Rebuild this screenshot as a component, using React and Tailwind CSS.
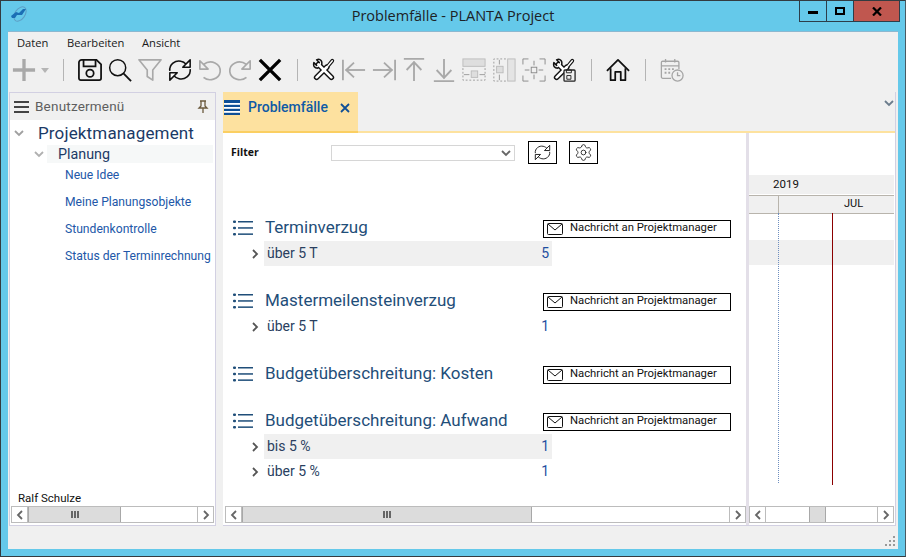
import React from 'react';
import { Settings } from 'lucide-react';

const GRAY = '#a9a9a9';
const NAVY = '#1f4e79';

const Tools = ({ save }) => (
  <svg width="24" height="24" viewBox="0 0 26 26" fill="none" strokeLinecap="round" strokeLinejoin="round">
    <g stroke="#111">
      <path d="M7 7 L21 21" strokeWidth="6" />
      <path d="M5 21 L16 10" strokeWidth="6" />
      <path d="M17 9 L22 3" strokeWidth="4" />
    </g>
    <path d="M2 5 L5 8 L8 5 L5 2 C9 0 12 4 10 8 L6 11 C3 11 1 9 2 5Z" fill="#fff" stroke="#111" strokeWidth="1.6" />
    <g stroke="#fff">
      <path d="M7 7 L21 21" strokeWidth="3" />
      <path d="M5 21 L16 10" strokeWidth="3" />
      <path d="M17 9 L22 3" strokeWidth="1.6" />
    </g>
    {save && (
      <g>
        <rect x="13" y="13" width="12" height="12" rx="1" fill="#f0f0f0" stroke="#222" strokeWidth="1.4" />
        <rect x="16" y="13" width="5" height="3" stroke="#222" />
        <rect x="16.5" y="19" width="4" height="4" stroke="#222" />
      </g>
    )}
  </svg>
);

const Refresh = ({ size = 24, weight = 1.7 }) => (
  <svg width={size} height={size} viewBox="0 0 26 26" fill="none" stroke="#111" strokeWidth={weight}>
    <path d="M2 14 C1 7 8 2 14 3.5 C17 4 19 6 20 7" />
    <path d="M24 12 C25 19 18 24 12 22.5 C9 22 7 20 6 19" />
    <path d="M24 2 V10 H16 Z" fill="#fff" strokeLinejoin="round" />
    <path d="M2 24 V16 H10 Z" fill="#fff" strokeLinejoin="round" />
  </svg>
);

const Undo = ({ flip }) => (
  <svg width="24" height="24" viewBox="0 0 26 26" fill="none" stroke={GRAY} strokeWidth="1.8" className={flip ? '-scale-x-100' : ''}>
    <path d="M6 7 C14 1 25 6 24 15 C23 23 12 26 6 21" />
    <path d="M2 3 V12 H11 Z" fill="#f0f0f0" strokeLinejoin="round" />
  </svg>
);

const ArrowIcon = ({ rotate }) => (
  <svg width="24" height="24" viewBox="0 0 26 26" fill="none" stroke={GRAY} strokeWidth="2" className={rotate}>
    <path d="M1 2 V24" />
    <path d="M4 13 H25" />
    <path d="M13 5 L4.5 13 L13 21" />
  </svg>
);

const boxes = {
  horizontal: (
    <>
      <rect x="1" y="1" width="24" height="8" fill="#dedede" stroke="#bbb" />
      <path d="M1 11 V24 H25 V11" strokeDasharray="2 2" stroke="#999" />
      <rect x="10" y="14" width="7" height="7" fill="#dedede" stroke="#bbb" />
      <path d="M2 18 H8 M19 18 H25" stroke="#999" />
    </>
  ),
  vertical: (
    <>
      <rect x="17" y="1" width="8" height="24" fill="#e4e4e4" stroke="#bbb" />
      <path d="M15 1 H2 V25 H15" strokeDasharray="2 2" stroke="#999" />
      <rect x="5" y="9" width="7" height="7" fill="#dedede" stroke="#bbb" />
      <path d="M8 2 V7 M8 18 V24" stroke="#999" />
    </>
  ),
  both: (
    <>
      <path d="M1 7 V1 H7 M19 1 H25 V7 M25 19 V25 H19 M7 25 H1 V19" stroke="#888" />
      <rect x="10" y="10" width="6" height="6" stroke="#888" />
      <path d="M13 3 V8 M13 18 V23 M3 13 H8 M18 13 H23" stroke="#888" />
    </>
  ),
};

const BoxIcon = ({ kind }) => (
  <svg width="24" height="24" viewBox="0 0 26 26" fill="none" strokeWidth="1">
    {boxes[kind]}
  </svg>
);

const toolbarIcons = [
  <svg key="save" width="24" height="24" viewBox="0 0 26 26" fill="none" stroke="#111" strokeWidth="1.9">
    <path d="M4 2 H20 L25 7 V22 A2 2 0 0 1 23 24 H3 A2 2 0 0 1 1 22 V5 A3 3 0 0 1 4 2Z" />
    <path d="M6 2 V9 H19 V2" />
    <circle cx="13" cy="16.5" r="4" />
  </svg>,
  <svg key="search" width="24" height="24" viewBox="0 0 26 26" fill="none" stroke="#111" strokeWidth="1.6">
    <circle cx="10.5" cy="10.5" r="8.7" />
    <path d="M17 17 L25 25" strokeWidth="2" />
  </svg>,
  <svg key="filter" width="24" height="24" viewBox="0 0 26 26" fill="none" stroke={GRAY} strokeWidth="1.8" strokeLinejoin="round">
    <path d="M1 2 H25 L16 13 V24 L10 20 V13 Z" />
  </svg>,
  <Refresh key="refresh" />,
  <Undo key="undo" />,
  <Undo key="redo" flip />,
  <svg key="close" width="24" height="24" viewBox="0 0 26 26" stroke="#000" strokeWidth="3.6">
    <path d="M2 2 L24 24 M24 2 L2 24" />
  </svg>,
];

const layoutIcons = [
  <Tools key="tools" />,
  <ArrowIcon key="left" />,
  <ArrowIcon key="right" rotate="rotate-180" />,
  <ArrowIcon key="up" rotate="rotate-90" />,
  <ArrowIcon key="down" rotate="-rotate-90" />,
  <BoxIcon key="h" kind="horizontal" />,
  <BoxIcon key="v" kind="vertical" />,
  <BoxIcon key="b" kind="both" />,
  <Tools key="toolsSave" save />,
];

const ToolButton = ({ children }) => (
  <div className="w-[30px] flex items-center justify-center">{children}</div>
);

const Separator = ({ className = '' }) => <div className={`w-[1px] h-[22px] bg-[#b4b4b4] ${className}`} />;

const Chevron = ({ dir = 'right', className = '' }) => (
  <svg width="10" height="10" viewBox="0 0 10 10" fill="none" stroke="currentColor" strokeWidth="1.8" className={className}>
    {dir === 'right' && <path d="M3 1 L7 5 L3 9" />}
    {dir === 'left' && <path d="M7 1 L3 5 L7 9" />}
    {dir === 'down' && <path d="M1 3 L5 7 L9 3" />}
  </svg>
);

const Scrollbar = ({ before, thumb, grip = true, className = '' }) => (
  <div className={`h-[17px] flex border border-[#bcbcbc] bg-white ${className}`}>
    <div className="w-[16px] flex items-center justify-center border-r border-[#bcbcbc] text-[#666]">
      <Chevron dir="left" />
    </div>
    <div className={before} />
    <div className={`flex items-center justify-center gap-[1px] bg-[#dcdcdc] border-x border-[#a8a8a8] ${thumb}`}>
      {grip && (
        <>
          <div className="w-[2px] h-[7px] bg-[#666]" />
          <div className="w-[2px] h-[7px] bg-[#666]" />
          <div className="w-[2px] h-[7px] bg-[#666]" />
        </>
      )}
    </div>
    <div className="flex-1" />
    <div className="w-[16px] flex items-center justify-center border-l border-[#bcbcbc] text-[#666]">
      <Chevron />
    </div>
  </div>
);

const Mail = () => (
  <svg width="16" height="12" viewBox="0 0 16 12" fill="none" stroke="#111" strokeWidth="1">
    <rect x="0.5" y="0.5" width="15" height="11" rx="1" />
    <path d="M1 1 L8 7 L15 1" />
  </svg>
);

const ListIcon = () => (
  <svg width="20" height="16" viewBox="0 0 20 16" fill={NAVY}>
    <rect x="0" y="0.5" width="3" height="2.4" rx="1" />
    <rect x="0" y="6.8" width="3" height="2.4" rx="1" />
    <rect x="0" y="13" width="3" height="2.4" rx="1" />
    <rect x="5" y="1" width="15" height="1.5" />
    <rect x="5" y="7.2" width="15" height="1.5" />
    <rect x="5" y="13.4" width="15" height="1.5" />
  </svg>
);

const groups = [
  { title: 'Terminverzug', gap: 'mt-[52px]', rows: [{ label: 'über 5 T', value: 5, shaded: true }] },
  { title: 'Mastermeilensteinverzug', gap: 'mt-[23px]', rows: [{ label: 'über 5 T', value: 1 }] },
  { title: 'Budgetüberschreitung: Kosten', gap: 'mt-[23px]', rows: [] },
  {
    title: 'Budgetüberschreitung: Aufwand',
    gap: 'mt-[22px]',
    rows: [
      { label: 'bis 5 %', value: 1, shaded: true },
      { label: 'über 5 %', value: 1 },
    ],
  },
];

const menuLinks = ['Neue Idee', 'Meine Planungsobjekte', 'Stundenkontrolle', 'Status der Terminrechnung'];

const App = () => (
  <div className="w-[906px] h-[557px] flex flex-col overflow-hidden bg-[#65c9ea] border border-[#333b40] border-r-[#4a5a62] font-['Roboto',sans-serif]">
    {/* title bar */}
    <div className="h-[30px] shrink-0 grid grid-cols-[1fr_auto_1fr]">
      <div className="pl-[9px] pt-[5px]">
        <svg width="18" height="18" viewBox="0 0 18 18">
          <ellipse cx="10" cy="8" rx="5" ry="8" transform="rotate(35 10 8)" fill="none" stroke="#5d9ec4" strokeWidth="1" />
          <path d="M1 10 L6 6 L9 7 L13 3 L16 3 L12 9 L7 9 L5 12 L2 12 Z" fill="#1b6fb5" />
        </svg>
      </div>
      <div className="text-[14.5px] leading-[30px] text-[#1d2226] font-['Open_Sans',sans-serif]">
        Problemfälle - PLANTA Project
      </div>
      <div className="flex justify-end pr-[5px]">
        <div className="h-[21px] flex border border-t-0 border-[#2c3e4a]">
          <div className="w-[27px] flex items-center justify-center border-r border-[#2c3e4a]">
            <div className="w-[10px] h-[3px] bg-black mt-[2px]" />
          </div>
          <div className="w-[26px] flex items-center justify-center">
            <div className="w-[10px] h-[8px] border-2 border-black" />
          </div>
          <div className="w-[46px] flex items-center justify-center bg-[#c0574f] border-l border-[#2c3e4a]">
            <svg width="10" height="9" viewBox="0 0 10 9" stroke="#000" strokeWidth="2.2">
              <path d="M1 0.5 L9 8.5 M9 0.5 L1 8.5" />
            </svg>
          </div>
        </div>
      </div>
    </div>

    {/* client area */}
    <div className="h-[518px] mx-[7px] flex flex-col bg-[#f0f0f0] border-t border-[#8cb8d0]">
      <div className="h-[20px] shrink-0 flex items-center pl-[9px] pt-[2px] text-[11.2px] text-[#1a1a1a] font-['Open_Sans',sans-serif]">
        <span className="w-[50px]">Daten</span>
        <span className="w-[75px]">Bearbeiten</span>
        <span>Ansicht</span>
      </div>

      <div className="h-[36px] shrink-0 flex items-center pl-[1px]">
        <div className="w-[30px] flex justify-center">
          <svg width="24" height="24" viewBox="0 0 26 26" stroke={GRAY} strokeWidth="3.6">
            <path d="M13 1 V25 M1 13 H25" />
          </svg>
        </div>
        <svg width="8" height="5" viewBox="0 0 8 5" fill="#b5b5b5" className="ml-[2px] mr-[14px]">
          <path d="M0 0 H8 L4 5Z" />
        </svg>
        <Separator className="mr-[11px]" />
        {toolbarIcons.map((icon) => (
          <ToolButton key={icon.key}>{icon}</ToolButton>
        ))}
        <Separator className="ml-[12px] mr-[11px]" />
        {layoutIcons.map((icon) => (
          <ToolButton key={icon.key}>{icon}</ToolButton>
        ))}
        <Separator className="ml-[12px] mr-[11px]" />
        <ToolButton>
          <svg width="24" height="24" viewBox="0 0 26 26" fill="none" stroke="#111" strokeWidth="1.9" strokeLinejoin="round">
            <path d="M1 14 L13 2 L25 14" />
            <path d="M5 11 V24 H10 V15 H16 V24 H21 V11" />
          </svg>
        </ToolButton>
        <Separator className="ml-[12px] mr-[11px]" />
        <ToolButton>
          <svg width="24" height="24" viewBox="0 0 26 26" fill="none" stroke="#a5a5a5" strokeWidth="1.4">
            <path d="M12 22 H3 A1.5 1.5 0 0 1 1.500 20.500 V5 A1.5 1.5 0 0 1 3 3.500 H19 A1.5 1.500 0 0 1 20.500 5 V12" />
            <path d="M1.500 8.500 H20.500 M6 1 V5 M16 1 V5" />
            <path d="M5 12 H7 M9 12 H11 M13 12 H15 M5 16 H7 M9 16 H11" strokeWidth="2" />
            <circle cx="19" cy="19" r="6" fill="#f0f0f0" />
            <path d="M19 15.500 V19 H22" />
          </svg>
        </ToolButton>
      </div>

      <div className="flex-1 flex gap-[7px] min-h-0 pl-[1px] pr-[1px] mt-[4px]">
        {/* left menu */}
        <div className="w-[207px] h-[434px] flex flex-col bg-white border border-[#d2d0e2]">
          <div className="h-[27px] shrink-0 flex items-center justify-between bg-[#f0f0f0] pl-[4px] pr-[6px]">
            <div className="flex items-center gap-[6px]">
              <svg width="15" height="12" viewBox="0 0 15 12" fill="#444">
                <rect width="15" height="2" />
                <rect y="5" width="15" height="2" />
                <rect y="10" width="15" height="2" />
              </svg>
              <span className="text-[13.500px] tracking-[0.2px] text-[#5e5e5e]">Benutzermenü</span>
            </div>
            <svg width="12" height="14" viewBox="0 0 12 14" fill="none" stroke="#6b5a3e" strokeWidth="1.300">
              <path d="M3 1 H9 M4 1.500 V6 L2 8 H10 L8 6 V1.500 M6 8 V13" />
            </svg>
          </div>

          <div className="flex-1 flex flex-col pt-[1px] text-[#1b3a66]">
            <div className="h-[24px] flex items-center">
              <Chevron dir="down" className="ml-[4px] text-[#a0a0a0]" />
              <span className="ml-[14px] text-[17px] leading-[25px] tracking-[0.15px]">Projektmanagement</span>
            </div>
            <div className="h-[18px] flex items-center">
              <Chevron dir="down" className="ml-[24px] text-[#b0b0b0]" />
              <div className="ml-[3px] w-[166px] h-[18px] pl-[11px] bg-[#f6f8f8] text-[14.3px] leading-[18px]">Planung</div>
            </div>
            {menuLinks.map((link, i) => (
              <div key={link} className={`ml-[55px] text-[12.15px] h-[27px] leading-[27px] whitespace-nowrap text-[#2257a8] ${i === 0 ? 'mt-[-1px]' : ''}`}>
                {link}
              </div>
            ))}
          </div>

          <div className="pl-[8px] text-[11.5px] leading-[16px] text-[#111]">Ralf Schulze</div>
          <Scrollbar className="mx-[1px] mb-[2px]" before="w-0" thumb="w-[93px]" />
        </div>

        {/* right pane */}
        <div className="w-[673px] h-[434px] flex flex-col bg-white border-r border-b border-[#d2d0e2]">
          <div className="h-[39px] shrink-0 flex justify-between bg-[#f0f0f0]">
            <div className="w-[135px] flex items-start gap-[8px] bg-[#fde19f] pl-[1px] pt-[8px]">
              <svg width="16" height="15" viewBox="0 0 16 15">
                <rect width="16" height="15" fill="#0f4f96" />
                <rect y="3" width="16" height="1.800" fill="#fff" />
                <rect y="7" width="16" height="1.800" fill="#fff" />
                <rect y="11" width="16" height="1.800" fill="#fff" />
              </svg>
              <span className="text-[14px] font-medium leading-[15px] text-[#0f5aa6]">Problemfälle</span>
              <svg width="10" height="10" viewBox="0 0 10 10" stroke="#0f4f96" strokeWidth="1.800" className="mt-[3px] ml-[4px]">
                <path d="M1 1 L9 9 M9 1 L1 9" />
              </svg>
            </div>
            <Chevron dir="down" className="mt-[6px] mr-[1px] text-[#6b7c8c]" />
          </div>
          <div className="h-[2px] shrink-0 flex bg-[#fde29f]">
            <div className="w-[135px] bg-[#fbcf62]" />
          </div>

          <div className="flex-1 flex min-h-0">
            {/* list column */}
            <div className="w-[523px] flex flex-col">
              <div className="flex-1 flex flex-col">
                <div className="flex items-center pl-[8px] pt-[8px]">
                  <span className="w-[100px] text-[10.5px] font-bold text-[#111] font-['Open_Sans',sans-serif]">Filter</span>
                  <div className="w-[184px] h-[16px] flex items-center justify-end pr-[3px] border border-[#d6d6d6] text-[#666]">
                    <Chevron dir="down" />
                  </div>
                  <div className="w-[29px] h-[23px] ml-[13px] flex items-center justify-center border border-black">
                    <Refresh size={17} weight={1.4} />
                  </div>
                  <div className="w-[29px] h-[23px] ml-[12px] flex items-center justify-center border border-black">
                    <Settings size={19} strokeWidth={1.1} color="#222" />
                  </div>
                </div>

                {groups.map((group) => (
                  <div key={group.title} className={group.gap}>
                    <div className="h-[24px] flex items-center pl-[10px]">
                      <ListIcon />
                      <span className="w-[278px] ml-[12px] text-[17px] text-[#1f4e79]">{group.title}</span>
                      <div className="w-[188px] h-[18px] mt-[2px] flex items-center border border-black pl-[3px] pb-[1px] gap-[7px] text-[11.3px] text-[#111]">
                        <Mail />
                        <span>Nachricht an Projektmanager</span>
                      </div>
                    </div>
                    <div className="mt-[1px]">
                      {group.rows.map((row) => (
                        <div key={row.label} className="h-[25px] flex items-center pl-[27px]">
                          <Chevron className="text-[#555]" />
                          <div className={`ml-[4px] w-[288px] h-[25px] flex items-center justify-between px-[3px] pb-[1px] text-[14px] text-[#2a3f5f] ${row.shaded ? 'bg-[#f0f0f0]' : ''}`}>
                            <span>{row.label}</span>
                            <span className="text-[#1f4ea0]">{row.value}</span>
                          </div>
                        </div>
                      ))}
                    </div>
                  </div>
                ))}
              </div>
              <Scrollbar className="ml-[2px] mb-[2px]" before="w-0" thumb="w-[290px]" />
            </div>

            <div className="w-[3px] bg-[#e3dfe8]" />

            {/* gantt column */}
            <div className="w-[145px] flex flex-col">
              <div className="flex-1 relative pt-[42px]">
                <div className="h-[19px] bg-[#f0f0f0] pl-[24px] text-[11.5px] leading-[19px] text-[#111]">2019</div>
                <div className="h-[1px] mt-[1px] bg-[#b8b4ac]" />
                <div className="h-[17px] flex bg-[#f0f0f0] text-[11px] leading-[15px] text-[#111]">
                  <div className="w-[30px] border-r border-[#b8b4ac]" />
                  <div className="ml-[65px]">JUL</div>
                </div>
                <div className="h-[1px] bg-[#b8b4ac]" />
                <div className="h-[25px] mt-[26px] bg-[#f0f0f0]" />
                <div className="absolute left-[29px] top-[80px] h-[270px] border-l border-dotted border-[#6f8fc0]" />
                <div className="absolute left-[83px] top-[80px] h-[272px] w-[1px] bg-[#8b0000]" />
              </div>
              <Scrollbar className="mb-[2px]" before="w-[43px]" thumb="w-[17px]" grip={false} />
            </div>
          </div>
        </div>
      </div>

      {/* status bar grip */}
      <div className="h-[22px] shrink-0 flex justify-end items-end pr-[3px] pb-[3px]">
        <svg width="10" height="10" viewBox="0 0 10 10" fill="#999">
          <rect x="8" y="0" width="2" height="2" />
          <rect x="4" y="4" width="2" height="2" />
          <rect x="8" y="4" width="2" height="2" />
          <rect x="0" y="8" width="2" height="2" />
          <rect x="4" y="8" width="2" height="2" />
          <rect x="8" y="8" width="2" height="2" />
        </svg>
      </div>
    </div>
  </div>
);

export default App;
